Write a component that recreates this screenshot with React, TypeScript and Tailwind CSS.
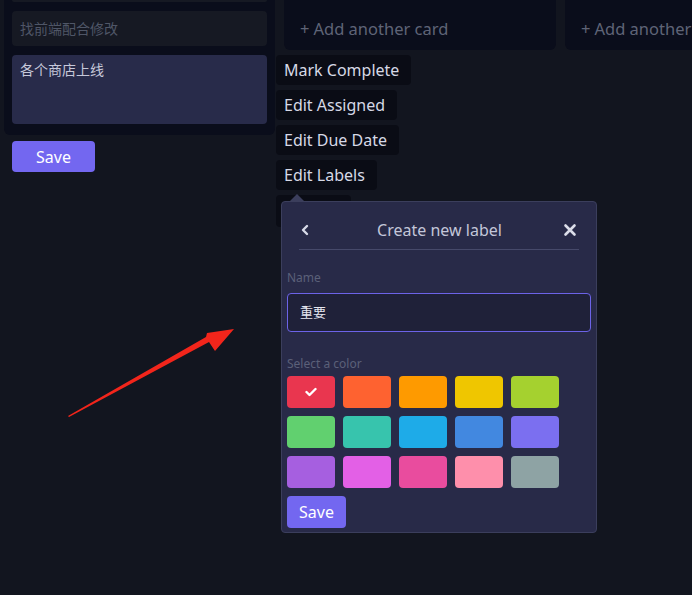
import React from 'react';

const swatches = [
  '#e9364f', '#fe6230', '#fe9a00', '#efc600', '#a5d12f',
  '#61d06f', '#37c4ad', '#1eabe8', '#4288e0', '#7b6ff0',
  '#a65fe0', '#e360e6', '#e94c9e', '#fe8fab', '#8ea3a4',
];

const menuItems = ['Mark Complete', 'Edit Assigned', 'Edit Due Date', 'Edit Labels'];

function AddCard() {
  return (
    <div className="h-[50px] flex items-center pl-4 pt-[8px] text-[16.5px] text-[#5f6477] whitespace-nowrap overflow-hidden">
      <span className="mr-1">+</span>
      <span>Add another card</span>
    </div>
  );
}

export default function App() {
  return (
    <div
      className="relative w-[692px] h-[595px] overflow-hidden bg-[#12151f]"
      style={{ fontFamily: '"Noto Sans", "Noto Sans CJK SC", sans-serif' }}
    >
      {/* Board */}
      <div className="flex items-start gap-[9px] pl-1">
        {/* List being edited */}
        <div className="flex flex-col shrink-0">
          <div className="w-[271px] bg-[#0a0d1b] rounded-b-md px-2 pb-[11px] flex flex-col gap-[9px]">
            <div className="h-[2px] bg-[#161923] rounded-b" />
            <div className="h-[35px] bg-[#161923] rounded flex items-center px-2 text-[14px] text-[#4f5667]">
              找前端配合修改
            </div>
            <div className="h-[69px] bg-[#282b4a] rounded px-2 pt-[4px] text-[14px] text-[#c6c8da]">
              各个商店上线
            </div>
          </div>
          <button className="mt-[6px] ml-2 w-[83px] h-[31px] bg-[#7367f0] rounded text-white text-[16px]">
            Save
          </button>
        </div>

        <div className="w-[272px] shrink-0 bg-[#0a0d1b] rounded-b-md">
          <AddCard />
        </div>
        <div className="w-[272px] shrink-0 bg-[#0a0d1b] rounded-b-md">
          <AddCard />
        </div>
      </div>

      {/* Card menu */}
      <div className="absolute left-[276px] top-[55px] flex flex-col items-start gap-[5px]">
        {menuItems.map((m) => (
          <div
            key={m}
            className="h-[30px] flex items-center pl-2 pr-3 bg-[#0a0c15] rounded-sm text-[16px] text-[#d6d9e6]"
          >
            {m}
          </div>
        ))}
        <div className="h-[32px] w-[75px] bg-[#0a0c15] rounded-sm" />
      </div>

      {/* Popover */}
      <div className="absolute left-[281px] top-[201px] w-[316px] h-[332px] bg-[#282a48] border border-[#3b3e5c] rounded">
        <svg className="absolute -top-[8px] left-[7px]" width="16" height="8" viewBox="0 0 16 8">
          <polygon points="0,8 8,0 16,8" fill="#3b3e5c" />
        </svg>
        <div className="relative mx-[17px] mt-[13px] h-[35px] pb-1 flex items-center justify-between border-b border-[#46496a]">
          <svg width="10" height="12" viewBox="0 0 10 12" className="ml-[1px]">
            <path d="M7 2 L3 6 L7 10" stroke="#d8dae8" strokeWidth="2.4" fill="none" strokeLinecap="round" strokeLinejoin="round" />
          </svg>
          <span className="pl-[6px] text-[16px] text-[#c3c6d9]">Create new label</span>
          <svg width="14" height="14" viewBox="0 0 14 14" className="mr-[2px]">
            <path d="M2.5 2.5 L11.5 11.5 M11.5 2.5 L2.5 11.5" stroke="#dcdeea" strokeWidth="2.6" strokeLinecap="round" />
          </svg>
        </div>

        <div className="px-[5px]">
          <div className="mt-[20px] text-[12px] leading-4 text-[#5b6079]">Name</div>
          <div className="mt-[7px] h-[39px] bg-[#1f2139] border border-[#6c63e8] rounded flex items-center px-3 text-[13px] text-[#e4e5ee]">
            重要
          </div>

          <div className="mt-[24px] text-[12px] leading-4 text-[#5b6079]">Select a color</div>
          <div className="mt-1 grid grid-cols-[repeat(5,48px)] gap-x-2 gap-y-2">
            {swatches.map((c, i) => (
              <div
                key={c}
                className="h-[32px] rounded flex items-center justify-center"
                style={{ backgroundColor: c }}
              >
                {i === 0 && (
                  <svg width="12" height="10" viewBox="0 0 12 10">
                    <path d="M1.5 5 L4.5 8 L10.5 2" stroke="#ffffff" strokeWidth="2.4" fill="none" strokeLinecap="round" strokeLinejoin="round" />
                  </svg>
                )}
              </div>
            ))}
          </div>
          <button className="mt-2 w-[59px] h-[32px] bg-[#7367f0] rounded text-white text-[16px]">
            Save
          </button>
        </div>
      </div>

      {/* Annotation arrow */}
      <svg className="absolute inset-0 pointer-events-none" width="692" height="595">
        <polygon
          points="68,416 206,337 207,333 234,329 215,351 209,342 69,417"
          fill="#f2251b"
        />
      </svg>
    </div>
  );
}
